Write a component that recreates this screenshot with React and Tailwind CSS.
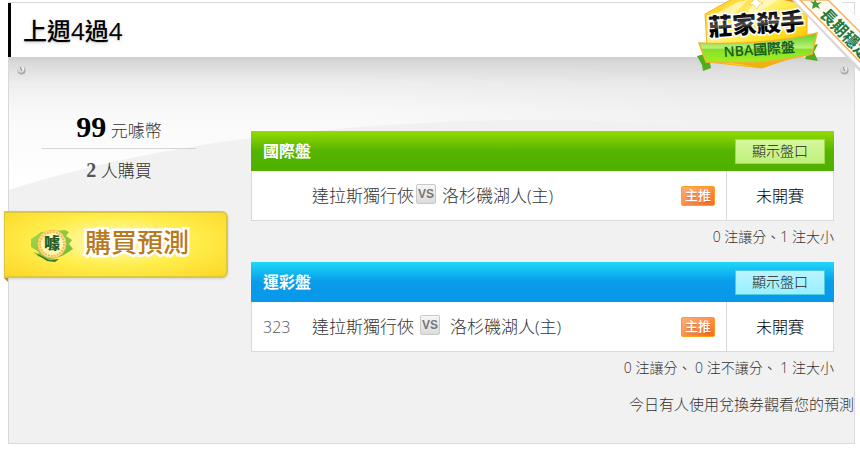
import React from "react";

const Swoosh = () => {
  return (
    <svg className="absolute inset-0 w-full h-[220px]" viewBox="0 0 844 220" preserveAspectRatio="none" aria-hidden="true">
      <defs>
        <linearGradient id="shade" x1="0" y1="0" x2="0" y2="1">
          <stop offset="0" stopColor="#cfcfcf" />
          <stop offset="0.03" stopColor="#dadada" />
          <stop offset="0.12" stopColor="#e9e9e9" />
          <stop offset="0.24" stopColor="#f1f1f1" />
          <stop offset="1" stopColor="#f1f1f1" />
        </linearGradient>
        <linearGradient id="glow" x1="0" y1="0" x2="0" y2="1">
          <stop offset="0.05" stopColor="#fff" stopOpacity="0" />
          <stop offset="0.45" stopColor="#fff" stopOpacity="0.6" />
          <stop offset="1" stopColor="#fff" />
        </linearGradient>
        <linearGradient id="fade" x1="0" y1="0" x2="1" y2="0">
          <stop offset="0" stopColor="#fff" />
          <stop offset="0.4" stopColor="#fff" />
          <stop offset="0.85" stopColor="#000" />
        </linearGradient>
        <mask id="sweep">
          <rect width="844" height="220" fill="url(#fade)" />
        </mask>
      </defs>
      <rect width="844" height="220" fill="url(#shade)" />
      <path d="M0 0H844V90C680 62 520 58 380 68C230 78 110 98 0 133Z" fill="url(#glow)" mask="url(#sweep)" />
    </svg>
  );
};

const Screw = () => {
  return (
    <svg className="w-[9px] h-[9px]" viewBox="0 0 9 9" aria-hidden="true">
      <circle cx="4.5" cy="4.5" r="4" fill="#a8a8a8" />
      <circle cx="4" cy="3.3" r="3.4" fill="#dadada" />
      <path d="M3.5 1L4.5 5" stroke="#8f8f8f" strokeWidth="1" />
      <path d="M5.5 1L6.5 4" stroke="#fff" strokeWidth="1" />
    </svg>
  );
};

const Badge = () => {
  return (
    <svg className="absolute top-0 right-0 w-[180px] h-[100px]" viewBox="0 0 180 100" role="img" aria-label="莊家殺手 NBA國際盤">
      <defs>
        <linearGradient id="gold" x1="0" y1="0" x2="1" y2="1">
          <stop offset="0" stopColor="#ffc400" />
          <stop offset="0.35" stopColor="#fff27a" />
          <stop offset="0.6" stopColor="#ffe11c" />
          <stop offset="1" stopColor="#f5b000" />
        </linearGradient>
        <linearGradient id="leaf" x1="0" y1="0" x2="0" y2="1">
          <stop offset="0" stopColor="#5fcf1c" />
          <stop offset="0.5" stopColor="#b8f27a" />
          <stop offset="0.55" stopColor="#86e02a" />
          <stop offset="1" stopColor="#a2f01e" />
        </linearGradient>
        <linearGradient id="ink" x1="0" y1="0" x2="0" y2="1">
          <stop offset="0.2" stopColor="#000" />
          <stop offset="0.55" stopColor="#4a4a4a" />
          <stop offset="0.65" stopColor="#000" />
        </linearGradient>
      </defs>
      <path d="M17 56L28 53L31 68L23 71L22 65Z" fill="#4fae1c" />
      <path d="M130 46L138 44L134 52L138 61L125 59Z" fill="#4fae1c" />
      <path d="M25 14L56 -3H106L123 3L127 14V52L82 68L28 62Z" fill="url(#gold)" stroke="#f6b21c" strokeWidth="1" />
      <path d="M42 61L82 68L116 57Z" fill="#efb010" />
      <path d="M30 17L58 2L68 0L36 32ZM76 0H98L60 24Z" fill="#fffbd0" opacity="0.7" />
      <path d="M76 -4L78 1L83 3L79 5L77 9L74 5L69 4L73 1Z" fill="#fff" stroke="#f0ae20" strokeWidth="0.5" />
      <path d="M19 43C60 45 98 42 137 33L132 54C96 63 62 64 26 62Z" fill="url(#leaf)" stroke="#f6b130" strokeWidth="1.5" />
      <text
        x="29" y="36" transform="rotate(-4 29 36)" fontSize="24" fontWeight="900"
        fontFamily="'Noto Sans CJK TC', sans-serif" fill="url(#ink)" stroke="#fff" strokeWidth="3" paintOrder="stroke"
      >
        莊家殺手
      </text>
      <text x="44" y="57" transform="rotate(-4 44 57)" fontSize="14" fontWeight="600" fontFamily="'Open Sans', 'Noto Sans CJK TC', sans-serif" fill="#14601c">
        NBA國際盤
      </text>
      <path d="M104 0H115L121 4Z" fill="#e88a1c" />
      <path d="M112 0H160L182 22V74Z" fill="#d8d8d8" />
      <path d="M114 0H160L182 22V70Z" fill="#fff" />
      <path d="M120 0H148L182 34V64Z" fill="#fffaf0" stroke="#f4b266" strokeWidth="1.5" />
      <path d="M135 -1L137 3L142 2L138 5L140 9L136 7L132 9L133 4L130 1L134 2Z" fill="#3f9c35" />
      <text x="139" y="15" transform="rotate(46 139 15)" fontSize="16" fontWeight="700" fontFamily="'Noto Sans CJK TC', sans-serif" fill="#1c7a44">
        長期穩定
      </text>
    </svg>
  );
};

const Coin = () => {
  return (
    <svg className="w-[48px] h-[36px]" viewBox="0 0 48 36" aria-hidden="true">
      <defs>
        <linearGradient id="brush" x1="0" y1="0" x2="1" y2="1">
          <stop offset="0" stopColor="#a8d848" />
          <stop offset="1" stopColor="#6fb83a" />
        </linearGradient>
      </defs>
      <path d="M2 12L8 8L12 5L36 3L40 5L37 9L43 13L40 17L44 22L38 26L33 29L20 33L8 29L10 25L2 20Z" fill="url(#brush)" />
      <path d="M4 25L11 28L20 33L30 32L26 35L18 34Z" fill="#3d7a2a" />
      <circle cx="23" cy="17" r="14" fill="#fff6a8" stroke="#fbc04a" strokeWidth="1" />
      <circle cx="23" cy="17" r="12" fill="none" stroke="#f9b25a" strokeWidth="2" strokeDasharray="2 1" />
      <text x="23" y="22" textAnchor="middle" fontSize="16" fontWeight="900" fontFamily="'Noto Sans CJK TC', sans-serif" fill="#255c28">
        噱
      </text>
    </svg>
  );
};

const Match = ({ title, id, headClass, buttonClass, vsClass, note }) => {
  return (
    <section>
      <div className={`flex items-center justify-between h-10 pl-3 pr-[9px] ${headClass}`}>
        <h2 className="text-base font-bold text-white">{title}</h2>
        <button className={`w-[90px] h-[25px] border text-sm leading-none font-light text-[#222] ${buttonClass}`}>顯示盤口</button>
      </div>
      <div className="flex h-[50px] bg-white border border-t-0 border-[#d9d9d9] text-[17px] font-light">
        <div className="flex flex-1 items-center px-[11px]">
          <span className="w-[49px] text-base text-[#555]">{id}</span>
          <span className="text-[#333]">達拉斯獨行俠</span>
          <span
            className={`flex items-center justify-center w-5 h-5 mb-1 border border-[#c8c8c8] rounded-xs bg-linear-to-b from-[#f6f6f6] to-[#dcdcdc] font-['Liberation_Sans',sans-serif] text-xs font-bold text-[#777] ${vsClass}`}
          >
            VS
          </span>
          <span className="text-[#333]">洛杉磯湖人(主)</span>
          <span className="flex items-center justify-center ml-auto w-[34px] h-5 border border-[#ff9d1c] rounded-xs bg-linear-to-br from-[#fdb070] to-[#fb6a1c] text-[13px] font-medium text-white text-shadow-sm">
            主推
          </span>
        </div>
        <div className="flex items-center justify-center w-[107px] border-l border-[#d9d9d9] text-base text-black">未開賽</div>
      </div>
      <p className="pt-1.5 text-right text-sm leading-5 font-light text-[#333]">{note}</p>
    </section>
  );
};

const App = () => {
  return (
    <div className="relative overflow-hidden bg-white pt-[2px] pl-2 pr-[5px] pb-[10px] font-['Open_Sans','Noto_Sans_CJK_TC',sans-serif]">
      <main className="border border-[#d9d9d9] bg-[#f1f1f1]">
        <header className="flex items-center h-[54px] -ml-px border-l-3 border-black bg-white pl-3 pt-0.5">
          <h1 className="text-2xl font-medium text-black text-shadow-md">上週4過4</h1>
        </header>
        <div className="relative">
          <Swoosh />
          <div className="relative flex justify-between pl-2 pr-[5px] pt-[9px]">
            <Screw />
            <Screw />
          </div>
          <div className="relative flex">
            <aside className="w-[242px] shrink-0 pt-9">
              <div className="w-[154px] ml-[33px] text-center text-[17px] font-light text-[#333]">
                <p className="h-[38px] leading-8 border-b border-[#d5d5d5]">
                  <b className="font-['Liberation_Serif',serif] text-[30px] font-bold text-black">99</b> 元噱幣
                </p>
                <p className="leading-[44px]">
                  <b className="font-['Liberation_Serif',serif] text-xl font-bold text-[#555]">2</b> 人購買
                </p>
              </div>
              <div className="-ml-[5px] mt-[18px]">
                <button className="flex items-center gap-2 w-56 h-[67px] pl-6 rounded-r-md border-2 border-l border-[#dcc83c] bg-radial-[at_50%_45%] from-[#fffcc8] via-[#ffee4c] to-[#fdd626] shadow-sm">
                  <Coin />
                  <span className="pb-1 text-[26px] font-medium text-[#b87a1c] [-webkit-text-stroke:5px_white] [paint-order:stroke]">購買預測</span>
                </button>
                <div className="w-1 h-1 bg-[#b8922c] [clip-path:polygon(0_0,100%_0,100%_100%)]"></div>
              </div>
            </aside>
            <div className="flex-1 pt-14 pr-5">
              <Match
                title="國際盤"
                id=""
                headClass="bg-linear-to-b from-[#93dc00] via-[#55b400] to-[#50b000]"
                buttonClass="bg-linear-to-b from-[#d5f79c] to-[#bff07c] border-[#a4dc50]"
                vsClass="ml-0.5 mr-1.5"
                note="0 注讓分、1 注大小"
              />
              <div className="h-[15px]"></div>
              <Match
                title="運彩盤"
                id="323"
                headClass="bg-linear-to-b from-[#20d8f8] via-[#089cea] to-[#0898e8]"
                buttonClass="bg-linear-to-b from-[#b8f4ff] to-[#98f0ff] border-[#50cce0]"
                vsClass="ml-1.5 mr-2.5"
                note="0 注讓分、 0 注不讓分、 1 注大小"
              />
            </div>
          </div>
          <p className="relative pt-4 pb-[29px] text-right text-[15px] leading-5 font-light text-[#333]">今日有人使用兌換券觀看您的預測</p>
        </div>
      </main>
      <Badge />
    </div>
  );
};

export default App;
